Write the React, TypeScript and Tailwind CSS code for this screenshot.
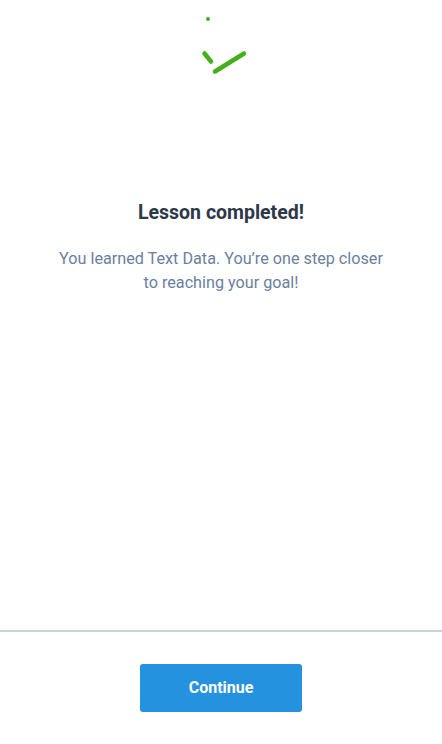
import React from "react";

export default function App() {
  return (
    <div className="flex h-[744px] w-[442px] flex-col bg-white" style={{ fontFamily: "Roboto, 'Noto Sans', sans-serif" }}>
      <div className="flex flex-1 flex-col items-center">
        <svg width="442" height="80" viewBox="0 0 442 80" className="block">
          <circle cx="208" cy="19" r="2" fill="#45b01c" />
          <line x1="204.5" y1="53.5" x2="211" y2="61.5" stroke="#45b01c" strokeWidth="4.5" strokeLinecap="round" />
          <line x1="215" y1="71.5" x2="244" y2="53.5" stroke="#45b01c" strokeWidth="4.5" strokeLinecap="round" />
        </svg>
        <h1 className="mt-[121px] text-[19.5px] font-bold leading-[24px] text-[#2d3748]">Lesson completed!</h1>
        <p className="mt-[22px] max-w-[334px] text-center text-[16.2px] leading-[24px] text-[#6b7f9e]">
          You learned Text Data. You’re one step closer to reaching your goal!
        </p>
      </div>
      <div className="flex justify-center border-t-2 border-[#cbd3dc] pt-[32px] pb-[32px]">
        <button className="h-[48px] w-[162px] rounded-[3px] bg-[#2492de] text-[16px] font-bold text-white">Continue</button>
      </div>
    </div>
  );
}
